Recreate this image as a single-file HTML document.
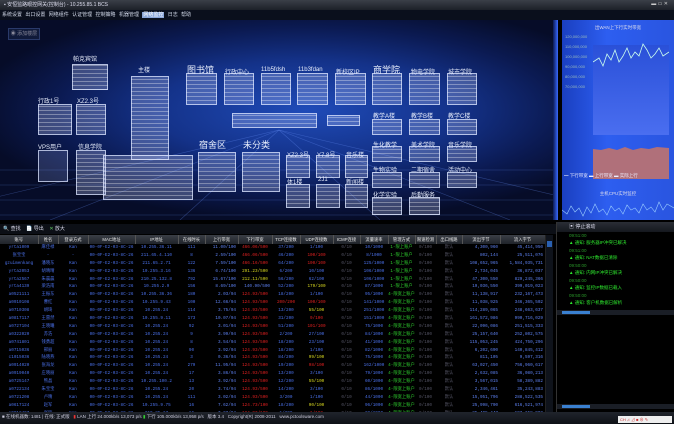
<!DOCTYPE html>
<html><head><meta charset="utf-8"><style>
*{margin:0;padding:0;box-sizing:border-box}
body{width:674px;height:424px;overflow:hidden;background:#000;font-family:"Liberation Sans","Noto Sans CJK SC",sans-serif;position:relative;color:#ccc}
.a{position:absolute}
#title{left:0;top:0;width:674px;height:10px;background:linear-gradient(#3a3f48,#1c2028);font-size:5px;color:#dde;line-height:10px;padding-left:4px}
#menu{left:0;top:10px;width:674px;height:10px;background:#0a0f1c;font-size:5px;color:#cfd6e6;line-height:10px;padding-left:2px;word-spacing:2px}
#menu b{background:#8aa6d8;color:#fff;font-weight:normal;padding:0 1px}
#scene{left:0;top:20px;width:558px;height:200px;background:radial-gradient(ellipse 60% 55% at 55% 45%,#1f4bb8 0%,#143289 45%,#0b1a52 75%,#060c28 100%);overflow:hidden}
.lb{position:absolute;font-size:6px;color:#e8eefc;white-space:nowrap}
.lb.big{font-size:9px}
.bx{position:absolute;border:1px solid rgba(220,230,255,.75);background:repeating-linear-gradient(0deg,rgba(255,255,255,.1) 0 3px,rgba(255,255,255,.4) 3px 4px),rgba(160,180,255,.2)}
#chart{left:562px;top:20px;width:112px;height:200px;background:linear-gradient(90deg,#1a3fc0,#2d5ef0 40%,#2a55e0);}
#tool{left:0;top:224px;width:556px;height:10px;background:#0c0f16;font-size:5px;color:#dde;line-height:10px;padding-left:3px}
table{position:absolute;left:0;top:235px;width:545px;border-collapse:collapse;font-size:4.3px;table-layout:fixed;font-family:"Liberation Mono","Noto Sans CJK SC",monospace}
th{height:9px;line-height:8px;padding:0;background:linear-gradient(#3a3e46,#20242a);color:#e6e6e6;font-weight:normal;border-right:1px solid #555;font-family:"Liberation Sans","Noto Sans CJK SC",sans-serif}
td{height:7.9px;line-height:6px;padding:0;color:#4a70e8;text-align:center;white-space:nowrap;overflow:hidden}
td.r{color:#e02020}td.y{color:#d8d820}td.g{color:#2ecc2e}td.d{color:#556}
td.n{color:#5d80f0;text-align:right;padding-right:2px}
#vs{left:545px;top:235px;width:8px;height:177px;background:#0f131b;border-left:1px solid #222}
#right{left:556px;top:222px;width:118px;height:190px;background:#000;border-left:1px solid #333}
.ev{font-size:4.5px;color:#2ee82e;padding-left:12px;height:8px;line-height:8px}
.tm{font-size:4.5px;color:#2a9a2a;padding-left:12px;height:7px;line-height:7px}
#status{left:0;top:412px;width:674px;height:12px;background:linear-gradient(#20242c,#0e1116);font-size:4.5px;color:#ccd;line-height:10px;padding-left:2px}
#clip{position:absolute;left:0;top:235px;width:545px;height:177px;overflow:hidden}
#clip table{top:0}
</style></head><body>
<div class="a" id="title">▪ 安恒监路眼控网关(控制台) - 10.255.85.1 BCS</div>
<div class="a" style="left:618px;top:1px;width:56px;height:8px;font-size:5px;color:#ccc;text-align:right;padding-right:6px">▬ ▭ ✕</div>
<div class="a" id="menu">系统设置 出口设置 网络组件 认证管理 控制策略 机器管理 <b>网络监控</b> 日志 帮助</div>
<div class="a" id="scene">
<svg width="558" height="200" style="position:absolute;left:0;top:0">
<g stroke="rgba(110,150,255,.35)" stroke-width="0.6">
<line x1="0" y1="150" x2="558" y2="150"/><line x1="0" y1="165" x2="558" y2="165"/><line x1="0" y1="180" x2="558" y2="180"/><line x1="0" y1="195" x2="558" y2="195"/>
<line x1="279" y1="110" x2="-100" y2="200"/><line x1="279" y1="110" x2="50" y2="200"/><line x1="279" y1="110" x2="180" y2="200"/><line x1="279" y1="110" x2="380" y2="200"/><line x1="279" y1="110" x2="510" y2="200"/><line x1="279" y1="110" x2="660" y2="200"/>
</g></svg>
<div class="a" style="left:8px;top:8px;width:32px;height:12px;border:1px solid #2a3a6a;background:#101a3a;font-size:5px;color:#889;line-height:10px;text-align:center">◉ 添加楼层</div>
<span class="lb" style="left:73px;top:34px">帕克宾馆</span><div class="bx" style="left:72px;top:44px;width:36px;height:26px"></div>
<span class="lb" style="left:138px;top:45px">主楼</span><div class="bx" style="left:131px;top:56px;width:38px;height:84px"></div>
<span class="lb" style="left:38px;top:76px">行政1号</span><div class="bx" style="left:38px;top:84px;width:34px;height:31px"></div>
<span class="lb" style="left:77px;top:76px">XZ2.3号</span><div class="bx" style="left:76px;top:84px;width:30px;height:31px"></div>
<span class="lb" style="left:38px;top:122px">VPS用户</span><div class="bx" style="left:38px;top:130px;width:30px;height:32px;background:rgba(160,180,255,.2)"></div>
<span class="lb" style="left:78px;top:122px">信息学院</span><div class="bx" style="left:76px;top:130px;width:30px;height:45px"></div>
<div class="bx" style="left:103px;top:135px;width:90px;height:45px"></div>
<span class="lb big" style="left:187px;top:43px">图书馆</span><div class="bx" style="left:186px;top:53px;width:31px;height:32px"></div>
<span class="lb" style="left:225px;top:47px">行政中心</span><div class="bx" style="left:224px;top:53px;width:30px;height:32px"></div>
<span class="lb" style="left:261px;top:47px">11b5fdsh</span><div class="bx" style="left:261px;top:53px;width:30px;height:32px"></div>
<span class="lb" style="left:298px;top:47px">11b3fdan</span><div class="bx" style="left:297px;top:53px;width:31px;height:32px"></div>
<span class="lb" style="left:336px;top:47px">新校区IP</span><div class="bx" style="left:335px;top:53px;width:31px;height:32px"></div>
<span class="lb big" style="left:373px;top:43px">商学院</span><div class="bx" style="left:372px;top:53px;width:30px;height:32px"></div>
<span class="lb" style="left:411px;top:47px">物电学院</span><div class="bx" style="left:409px;top:53px;width:31px;height:32px"></div>
<span class="lb" style="left:448px;top:47px">城市学院</span><div class="bx" style="left:447px;top:53px;width:30px;height:32px"></div>
<div class="bx" style="left:232px;top:93px;width:85px;height:15px"></div><div class="bx" style="left:327px;top:95px;width:33px;height:11px"></div>
<span class="lb" style="left:373px;top:91px">教学A楼</span><div class="bx" style="left:372px;top:99px;width:30px;height:16px"></div>
<span class="lb" style="left:411px;top:91px">教学B楼</span><div class="bx" style="left:409px;top:99px;width:31px;height:16px"></div>
<span class="lb" style="left:448px;top:91px">教学C楼</span><div class="bx" style="left:447px;top:99px;width:30px;height:16px"></div>
<span class="lb big" style="left:199px;top:118px">宿舍区</span><div class="bx" style="left:198px;top:132px;width:38px;height:40px"></div>
<span class="lb big" style="left:243px;top:118px">未分类</span><div class="bx" style="left:242px;top:132px;width:38px;height:40px"></div>
<span class="lb" style="left:287px;top:130px">XZ2.3号</span><div class="bx" style="left:286px;top:135px;width:24px;height:23px"></div>
<span class="lb" style="left:317px;top:130px">Y7.8号</span><div class="bx" style="left:316px;top:135px;width:24px;height:23px"></div>
<span class="lb" style="left:346px;top:130px">音乐楼</span><div class="bx" style="left:345px;top:135px;width:23px;height:23px"></div>
<span class="lb" style="left:287px;top:157px">体1楼</span><div class="bx" style="left:286px;top:164px;width:24px;height:24px"></div>
<span class="lb" style="left:318px;top:157px">2J1</span><div class="bx" style="left:316px;top:164px;width:24px;height:24px"></div>
<span class="lb" style="left:346px;top:157px">新闻楼</span><div class="bx" style="left:345px;top:164px;width:23px;height:24px"></div>
<span class="lb" style="left:373px;top:120px">生化教学</span><div class="bx" style="left:372px;top:126px;width:30px;height:16px"></div>
<span class="lb" style="left:411px;top:120px">美术学院</span><div class="bx" style="left:409px;top:126px;width:31px;height:16px"></div>
<span class="lb" style="left:448px;top:120px">音乐学院</span><div class="bx" style="left:447px;top:126px;width:30px;height:16px"></div>
<span class="lb" style="left:373px;top:145px">生物实验</span><div class="bx" style="left:372px;top:152px;width:30px;height:16px"></div>
<span class="lb" style="left:411px;top:145px">二期宿舍</span><div class="bx" style="left:409px;top:152px;width:31px;height:16px"></div>
<span class="lb" style="left:448px;top:145px">活动中心</span><div class="bx" style="left:447px;top:152px;width:30px;height:16px"></div>
<span class="lb" style="left:373px;top:170px">化学实验</span><div class="bx" style="left:372px;top:177px;width:30px;height:18px"></div>
<span class="lb" style="left:411px;top:170px">后勤服务</span><div class="bx" style="left:409px;top:177px;width:31px;height:18px"></div>
<div class="a" style="left:553px;top:0;width:5px;height:200px;background:linear-gradient(90deg,#0b1a52,#3a6aff)"></div>
</div>
<div class="a" id="chart">
<div class="a" style="left:0;width:112px;font-size:4.5px;color:#dde;text-align:center;top:5px">出WAN上下行实时带宽</div>
<div class="a" style="left:3px;top:12px;font-size:4px;color:#9bb;line-height:10px">120,000,000<br>110,000,000<br>100,000,000<br>90,000,000<br>80,000,000<br>70,000,000</div>
<div class="a" style="left:31px;top:25px;width:76px;height:90px;background:linear-gradient(#2a50d8,#4a6ef0)"></div>
<svg class="a" style="left:31px;top:22px" width="76" height="140"><polyline fill="none" stroke="#cfe" stroke-width="0.8" points="0,20 6,16 10,24 14,12 18,18 22,8 26,20 30,14 34,6 38,16 42,10 46,14 50,2 54,8 58,16 62,12 66,6 70,14 76,10"/>
<path d="M0,107 L8,108 16,106 24,108 32,105 40,108 48,106 56,107 64,105 76,106 L76,137 L0,137Z" fill="#b0707a"/></svg>
<div class="a" style="left:2px;top:153px;width:110px;font-size:4.5px;color:#eef">━ 下行带宽 ▬ 上行带宽 ▬ 实际上行</div>
<div class="a" style="left:0;top:171px;width:112px;font-size:4.5px;color:#dde;text-align:center">主机CPU实时监控</div>
<svg class="a" style="left:0;top:178px" width="112" height="22"><polyline fill="none" stroke="#9cf" stroke-width="0.6" points="0,12 5,16 9,8 13,14 17,10 21,18 25,9 29,15 33,6 37,14 41,11 45,17 49,8 53,13 57,10 61,16 65,7 69,12 73,10 77,15 81,6 85,12 89,9 93,14 97,4 101,12 105,6 112,10"/></svg>
</div>
<div class="a" id="tool">🔍 查找 &nbsp;&nbsp; 📄 导出 &nbsp;&nbsp; <span style="color:#6c6">✕</span> 放大</div>
<div id="clip"><table>
<colgroup><col style="width:38px"><col style="width:20px"><col style="width:30px"><col style="width:47px"><col style="width:43px"><col style="width:27px"><col style="width:33px"><col style="width:34px"><col style="width:28px"><col style="width:33px"><col style="width:27px"><col style="width:28px"><col style="width:27px"><col style="width:21px"><col style="width:26px"><col style="width:38px"><col style="width:45px"></colgroup>
<tr><th>账号</th><th>姓名</th><th>登录方式</th><th>MAC地址</th><th>IP地址</th><th>在线时长</th><th>上行带宽</th><th>下行带宽</th><th>TCP连接数</th><th>UDP连接数</th><th>ICMP连接</th><th>流量速率</th><th>管理方式</th><th>限速检测</th><th>出口线路</th><th>流出字节</th><th>流入字节</th></tr>
<tr><td>yrta1009</td><td>麻佳禄</td><td>Kan</td><td>00-0F-E2-03-8C-26</td><td>10.255.36.11</td><td>111</td><td class="n">11.00/100</td><td class="r">466.06/500</td><td>37/200</td><td>1/100</td><td class="d">0/10</td><td>10/1000</td><td class="g">1-限上账户</td><td class="d">0/100</td><td class="d">默认</td><td class="n">4,300,960</td><td class="n">45,414,950</td></tr>
<tr><td>张宝宝</td><td>-</td><td>-</td><td>00-0F-E2-03-8C-26</td><td>211.65.4.110</td><td>8</td><td class="n">2.59/100</td><td class="r">466.06/500</td><td>46/200</td><td class="r">100/100</td><td class="d">0/10</td><td>8/1000</td><td class="g">1-限上账户</td><td class="d">0/100</td><td class="d">默认</td><td class="n">802,144</td><td class="n">25,511,076</td></tr>
<tr><td>gzuimenkang</td><td>潘晓东</td><td>Kan</td><td>00-0F-E2-03-8C-26</td><td>211.65.2.71</td><td>122</td><td class="n">7.59/100</td><td class="r">466.16/500</td><td>64/200</td><td class="r">100/100</td><td class="d">0/10</td><td>125/1000</td><td class="g">1-限上账户</td><td class="d">0/100</td><td class="d">默认</td><td class="n">108,652,965</td><td class="n">1,584,935,731</td></tr>
<tr><td>yrta2053</td><td>胡晴晴</td><td>Kan</td><td>00-0F-E2-03-8C-26</td><td>10.255.3.16</td><td>136</td><td class="n">6.74/100</td><td class="y">291.23/500</td><td>6/200</td><td>10/100</td><td class="d">0/10</td><td>106/1000</td><td class="g">1-限上账户</td><td class="d">0/100</td><td class="d">默认</td><td class="n">2,734,045</td><td class="n">36,872,037</td></tr>
<tr><td>yrta2567</td><td>朱晨晨</td><td>Kan</td><td>00-0F-E2-03-8C-26</td><td>210.25.132.8</td><td>792</td><td class="n">15.67/100</td><td class="y">212.11/500</td><td>56/200</td><td>62/100</td><td class="d">0/10</td><td>106/1000</td><td class="g">1-限上账户</td><td class="d">0/100</td><td class="d">默认</td><td class="n">47,300,550</td><td class="n">829,245,366</td></tr>
<tr><td>yrta4139</td><td>梁浩南</td><td>Kan</td><td>00-0F-E2-03-8C-26</td><td>10.255.2.9</td><td>156</td><td class="n">8.69/100</td><td class="n">140.90/500</td><td>52/200</td><td class="y">179/100</td><td class="d">0/10</td><td>87/1000</td><td class="g">1-限上账户</td><td class="d">0/100</td><td class="d">默认</td><td class="n">19,036,550</td><td class="n">399,019,023</td></tr>
<tr><td>a0521111</td><td>王振东</td><td>Kan</td><td>00-0F-E2-03-8C-26</td><td>10.255.36.36</td><td>180</td><td class="n">2.03/94</td><td class="r">124.93/500</td><td>18/200</td><td>1/100</td><td class="d">0/10</td><td>95/1000</td><td class="g">4-限宽上账户</td><td class="d">0/100</td><td class="d">默认</td><td class="n">11,138,917</td><td class="n">232,167,473</td></tr>
<tr><td>a0910108</td><td>曹红</td><td>Kan</td><td>00-0F-E2-03-8C-26</td><td>10.255.9.43</td><td>100</td><td class="n">12.66/94</td><td class="r">124.93/500</td><td class="r">200/200</td><td class="r">100/100</td><td class="d">0/10</td><td>141/1000</td><td class="g">4-限宽上账户</td><td class="d">0/100</td><td class="d">默认</td><td class="n">11,038,925</td><td class="n">346,365,502</td></tr>
<tr><td>a0710308</td><td>胡琦</td><td>Kan</td><td>00-0F-E2-03-8C-26</td><td>10.255.24</td><td>114</td><td class="n">3.75/94</td><td class="r">124.93/500</td><td>13/200</td><td class="y">55/100</td><td class="d">0/10</td><td>251/1000</td><td class="g">4-限宽上账户</td><td class="d">0/100</td><td class="d">默认</td><td class="n">114,289,065</td><td class="n">248,663,637</td></tr>
<tr><td>a0817117</td><td>王雷然</td><td>Kan</td><td>00-0F-E2-03-8C-26</td><td>10.255.9.11</td><td>173</td><td class="n">10.07/94</td><td class="r">124.93/500</td><td>31/200</td><td class="r">9/100</td><td class="d">0/10</td><td>151/1000</td><td class="g">4-限宽上账户</td><td class="d">0/100</td><td class="d">默认</td><td class="n">161,572,986</td><td class="n">990,716,029</td></tr>
<tr><td>a0727104</td><td>王晓曦</td><td>Kan</td><td>00-0F-E2-03-8C-26</td><td>10.255.24</td><td>92</td><td class="n">3.01/94</td><td class="r">124.93/500</td><td>51/200</td><td class="r">101/100</td><td class="d">0/10</td><td>75/1000</td><td class="g">4-限宽上账户</td><td class="d">0/100</td><td class="d">默认</td><td class="n">22,096,086</td><td class="n">251,515,333</td></tr>
<tr><td>a0322020</td><td>苏浩</td><td>Kan</td><td>00-0F-E2-03-8C-26</td><td>10.255.24</td><td>9</td><td class="n">3.99/94</td><td class="r">124.93/500</td><td>2/200</td><td>27/100</td><td class="d">0/10</td><td>84/1000</td><td class="g">4-限宽上账户</td><td class="d">0/100</td><td class="d">默认</td><td class="n">25,157,640</td><td class="n">252,802,575</td></tr>
<tr><td>a0741801</td><td>钱勇超</td><td>Kan</td><td>00-0F-E2-03-8C-26</td><td>10.255.24</td><td>8</td><td class="n">3.54/94</td><td class="r">124.93/500</td><td>18/200</td><td>23/100</td><td class="d">0/10</td><td>41/1000</td><td class="g">4-限宽上账户</td><td class="d">0/100</td><td class="d">默认</td><td class="n">115,053,245</td><td class="n">424,750,296</td></tr>
<tr><td>a0715036</td><td>邢丽</td><td>Kan</td><td>00-0F-E2-03-8C-26</td><td>10.255.24</td><td>90</td><td class="n">3.92/94</td><td class="r">124.93/500</td><td>18/200</td><td>1/100</td><td class="d">0/10</td><td>82/1000</td><td class="g">4-限宽上账户</td><td class="d">0/100</td><td class="d">默认</td><td class="n">6,202,690</td><td class="n">140,845,412</td></tr>
<tr><td>c1015036</td><td>陆晓燕</td><td>Kan</td><td>00-0F-E2-03-8C-26</td><td>10.255.24</td><td>3</td><td class="n">0.36/94</td><td class="r">124.93/500</td><td>84/200</td><td class="y">99/100</td><td class="d">0/10</td><td>75/1000</td><td class="g">4-限宽上账户</td><td class="d">0/100</td><td class="d">默认</td><td class="n">811,105</td><td class="n">9,597,316</td></tr>
<tr><td>a0914020</td><td>张海龙</td><td>Kan</td><td>00-0F-E2-03-8C-26</td><td>10.255.24</td><td>279</td><td class="n">11.95/94</td><td class="r">124.93/500</td><td>19/200</td><td class="r">98/100</td><td class="d">0/10</td><td>162/1000</td><td class="g">4-限宽上账户</td><td class="d">0/100</td><td class="d">默认</td><td class="n">63,027,450</td><td class="n">756,960,617</td></tr>
<tr><td>a0919040</td><td>庄晓丽</td><td>Kan</td><td>00-0F-E2-03-8C-26</td><td>10.255.24</td><td>17</td><td class="n">3.86/94</td><td class="r">124.93/500</td><td>13/200</td><td>3/100</td><td class="d">0/10</td><td>79/1000</td><td class="g">4-限宽上账户</td><td class="d">0/100</td><td class="d">默认</td><td class="n">2,632,085</td><td class="n">36,080,213</td></tr>
<tr><td>a0725147</td><td>熊晶</td><td>Kan</td><td>00-0F-E2-03-8C-26</td><td>10.255.100.2</td><td>13</td><td class="n">3.92/94</td><td class="r">124.93/500</td><td>12/200</td><td class="y">55/100</td><td class="d">0/10</td><td>60/1000</td><td class="g">4-限宽上账户</td><td class="d">0/100</td><td class="d">默认</td><td class="n">3,567,015</td><td class="n">58,389,882</td></tr>
<tr><td>a0722134</td><td>朱宝宝</td><td>Kan</td><td>00-0F-E2-03-8C-26</td><td>10.255.24</td><td>20</td><td class="n">3.74/94</td><td class="r">124.93/500</td><td>14/200</td><td>3/100</td><td class="d">0/10</td><td>86/1000</td><td class="g">4-限宽上账户</td><td class="d">0/100</td><td class="d">默认</td><td class="n">2,346,461</td><td class="n">35,243,883</td></tr>
<tr><td>a0721208</td><td>卢晴</td><td>Kan</td><td>00-0F-E2-03-8C-26</td><td>10.255.24</td><td>111</td><td class="n">3.02/94</td><td class="r">124.93/500</td><td>3/200</td><td>1/100</td><td class="d">0/10</td><td>44/1000</td><td class="g">4-限宽上账户</td><td class="d">0/100</td><td class="d">默认</td><td class="n">15,951,796</td><td class="n">288,522,535</td></tr>
<tr><td>a0617124</td><td>赵军</td><td>Kan</td><td>00-0F-E2-03-8C-26</td><td>10.255.9.75</td><td>16</td><td class="n">7.62/94</td><td class="r">124.73/100</td><td>18/200</td><td class="y">90/100</td><td class="d">0/10</td><td>96/1000</td><td class="g">4-限宽上账户</td><td class="d">0/100</td><td class="d">默认</td><td class="n">25,998,790</td><td class="n">616,521,974</td></tr>
<tr><td>a0912407</td><td>张欣</td><td>Kan</td><td>00-0F-E2-03-8C-26</td><td>210.25.17</td><td>16</td><td class="n">7.23/94</td><td class="r">124.93/100</td><td>1/200</td><td class="r">1/100</td><td class="d">0/10</td><td>22/1000</td><td class="g">4-限宽上账户</td><td class="d">0/100</td><td class="d">默认</td><td class="n">25,405,447</td><td class="n">193,158,902</td></tr>
</table></div>
<div class="a" id="vs"><div style="margin:6px 1px;height:6px;background:#2a60b0"></div></div>
<div class="a" id="right">
<div style="height:10px;background:linear-gradient(#2a2e36,#15181e);font-size:5px;color:#dde;line-height:10px;padding-left:12px">▣ 停止滚动</div>
<div class="tm">09:51:00</div><div class="ev">▲ 通知: 服务器IP冲突已解决</div>
<div class="tm">09:51:00</div><div class="ev">▲ 通知: NAT数据已清除</div>
<div class="tm">09:50:00</div><div class="ev">▲ 通知: 内网IP冲突已解决</div>
<div class="tm">09:50:00</div><div class="ev">▲ 通知: 监控IP数据已载入</div>
<div class="tm">09:50:00</div><div class="ev">▲ 通知: 客户机数据已解析</div>
<div style="margin-top:3px;height:5px;background:#1a1e26;position:relative"><div style="position:absolute;left:5px;top:1px;width:28px;height:3px;background:#3a80d0"></div></div>
<div style="position:absolute;left:0;top:182px;width:117px;height:5px;background:#1a1e26"><div style="position:absolute;left:5px;top:1px;width:28px;height:3px;background:#3a80d0"></div></div>
</div>
<div class="a" id="status">■ 在线机器数: 1481 | 在线: 正式版 &nbsp; <span style="color:#e33">▮</span> LAN 上行 24.000kb/s 13,073 p/s <span style="color:#3c3">▮</span> 下行 105.000kb/s 13,958 p/s &nbsp; 版本 3.4 &nbsp; Copyright(R) 2008-2011 &nbsp; www.pctoolsware.com</div>
<div class="a" style="left:618px;top:416px;width:54px;height:7px;background:#eee;font-size:4px;color:#c33;line-height:7px;padding-left:2px">CH ♫ ⊿ ■ ⊕ ✎</div>
</body></html>
